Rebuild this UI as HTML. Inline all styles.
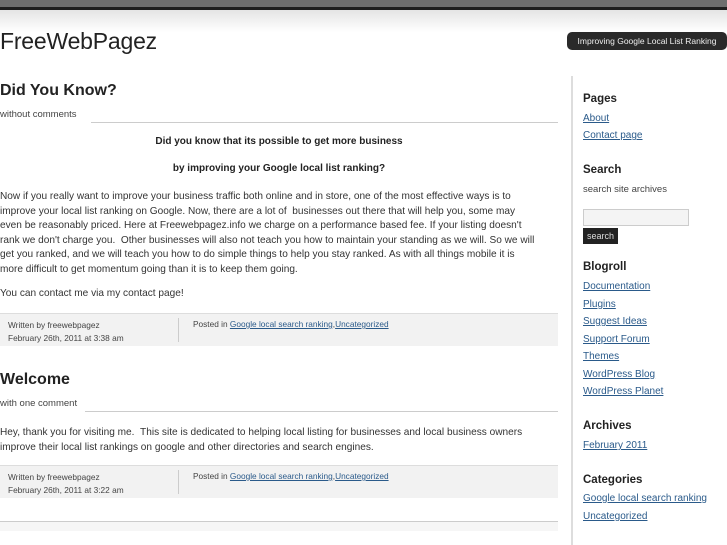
<!DOCTYPE html>
<html><head><meta charset="utf-8"><style>
*{margin:0;padding:0;box-sizing:border-box}
body{width:727px;height:545px;overflow:hidden;background:#fff;font-family:"Liberation Sans",sans-serif;color:#333;position:relative}
.abs{position:absolute;white-space:nowrap}
.top{position:absolute;left:0;top:0;width:727px;height:7px;background:#6e6e6e}
.top2{position:absolute;left:0;top:7px;width:727px;height:3px;background:#1e1e1e}
.top3{position:absolute;left:0;top:10px;width:727px;height:22px;background:linear-gradient(#e4e4e4,#fff)}
a{color:#2a5a8a;text-decoration:underline}
.p{font-size:10.1px;line-height:14.6px;color:#333}
.h{font-size:16px;font-weight:bold;color:#222}
.meta{font-size:9.5px;color:#444}
.rule{position:absolute;height:1px;background:#ccc}
.foot{position:absolute;left:0;width:558px;background:#f2f2f2;border-top:1px solid #ddd}
.foot .l{position:absolute;left:8px;top:5px;font-size:8.3px;line-height:13px;color:#444;white-space:nowrap}
.foot .d{position:absolute;left:178px;top:4px;width:1px;height:24px;background:#ccc}
.foot .r{position:absolute;left:193px;top:5px;font-size:8.3px;color:#444;white-space:nowrap}
.sh{font-size:11.5px;font-weight:bold;color:#222}
.sl{font-size:10px;color:#2a5a8a;text-decoration:underline}
</style></head><body>
<div class="top"></div><div class="top2"></div><div class="top3"></div>
<div class="abs" style="left:0;top:28px;font-size:23px;color:#222;letter-spacing:-.2px">FreeWebPagez</div>
<div class="abs" style="left:567px;top:32px;width:160px;height:18px;background:#2a2a2a;border-radius:5px;color:#eee;font-size:8.5px;line-height:18px;text-align:center">Improving Google Local List Ranking</div>
<div class="abs" style="left:571px;top:76px;width:2px;height:469px;background:#ddd"></div>

<div class="abs h" style="left:0;top:82px">Did You Know?</div>
<div class="abs meta" style="left:0;top:109px">without comments</div>
<div class="rule" style="left:91px;top:122px;width:467px"></div>
<div class="abs" style="left:0;width:558px;text-align:center;top:136px;font-size:10px;font-weight:bold;color:#222">Did you know that its possible to get more business</div>
<div class="abs" style="left:0;width:558px;text-align:center;top:163px;font-size:10px;font-weight:bold;color:#222">by improving your Google local list ranking?</div>
<div class="abs p" style="left:0;top:190px">Now if you really want to improve your business traffic both online and in store, one of the most effective ways is to<br>improve your local list ranking on Google. Now, there are a lot of &nbsp;businesses out there that will help you, some may<br>even be reasonably priced. Here at Freewebpagez.info we charge on a performance based fee. If your listing doesn't<br>rank we don't charge you. &nbsp;Other businesses will also not teach you how to maintain your standing as we will. So we will<br>get you ranked, and we will teach you how to do simple things to help you stay ranked. As with all things mobile it is<br>more difficult to get momentum going than it is to keep them going.</div>
<div class="abs p" style="left:0;top:287px">You can contact me via my contact page!</div>
<div class="foot" style="top:313px;height:33px"><div class="l">Written by freewebpagez<br>February 26th, 2011 at 3:38 am</div><div class="d"></div><div class="r">Posted in <a>Google local search ranking</a>,<a>Uncategorized</a></div></div>

<div class="abs h" style="left:0;top:371px">Welcome</div>
<div class="abs meta" style="left:0;top:398px">with one comment</div>
<div class="rule" style="left:85px;top:411px;width:473px"></div>
<div class="abs p" style="left:0;top:426px">Hey, thank you for visiting me. &nbsp;This site is dedicated to helping local listing for businesses and local business owners<br>improve their local list rankings on google and other directories and search engines.</div>
<div class="foot" style="top:465px;height:33px"><div class="l">Written by freewebpagez<br>February 26th, 2011 at 3:22 am</div><div class="d"></div><div class="r">Posted in <a>Google local search ranking</a>,<a>Uncategorized</a></div></div>
<div class="rule" style="left:0;top:521px;width:558px"></div>
<div class="abs" style="left:0;top:522px;width:558px;height:9px;background:#f6f6f6"></div>

<div class="abs sh" style="left:583px;top:93px">Pages</div>
<div class="abs sl" style="left:583px;top:113px">About</div>
<div class="abs sl" style="left:583px;top:130px">Contact page</div>
<div class="abs sh" style="left:583px;top:164px">Search</div>
<div class="abs" style="left:583px;top:184px;font-size:9.5px;color:#444">search site archives</div>
<div class="abs" style="left:583px;top:209px;width:106px;height:17px;border:1px solid #ccc;background:#f4f4f4"></div>
<div class="abs" style="left:583px;top:228px;width:35px;height:16px;background:#222;color:#ddd;font-size:9px;line-height:16px;text-align:center">search</div>
<div class="abs sh" style="left:583px;top:261px">Blogroll</div>
<div class="abs sl" style="left:583px;top:281px">Documentation</div>
<div class="abs sl" style="left:583px;top:299px">Plugins</div>
<div class="abs sl" style="left:583px;top:316px">Suggest Ideas</div>
<div class="abs sl" style="left:583px;top:334px">Support Forum</div>
<div class="abs sl" style="left:583px;top:351px">Themes</div>
<div class="abs sl" style="left:583px;top:369px">WordPress Blog</div>
<div class="abs sl" style="left:583px;top:386px">WordPress Planet</div>
<div class="abs sh" style="left:583px;top:420px">Archives</div>
<div class="abs sl" style="left:583px;top:440px">February 2011</div>
<div class="abs sh" style="left:583px;top:474px">Categories</div>
<div class="abs sl" style="left:583px;top:493px">Google local search ranking</div>
<div class="abs sl" style="left:583px;top:511px">Uncategorized</div>
</body></html>
